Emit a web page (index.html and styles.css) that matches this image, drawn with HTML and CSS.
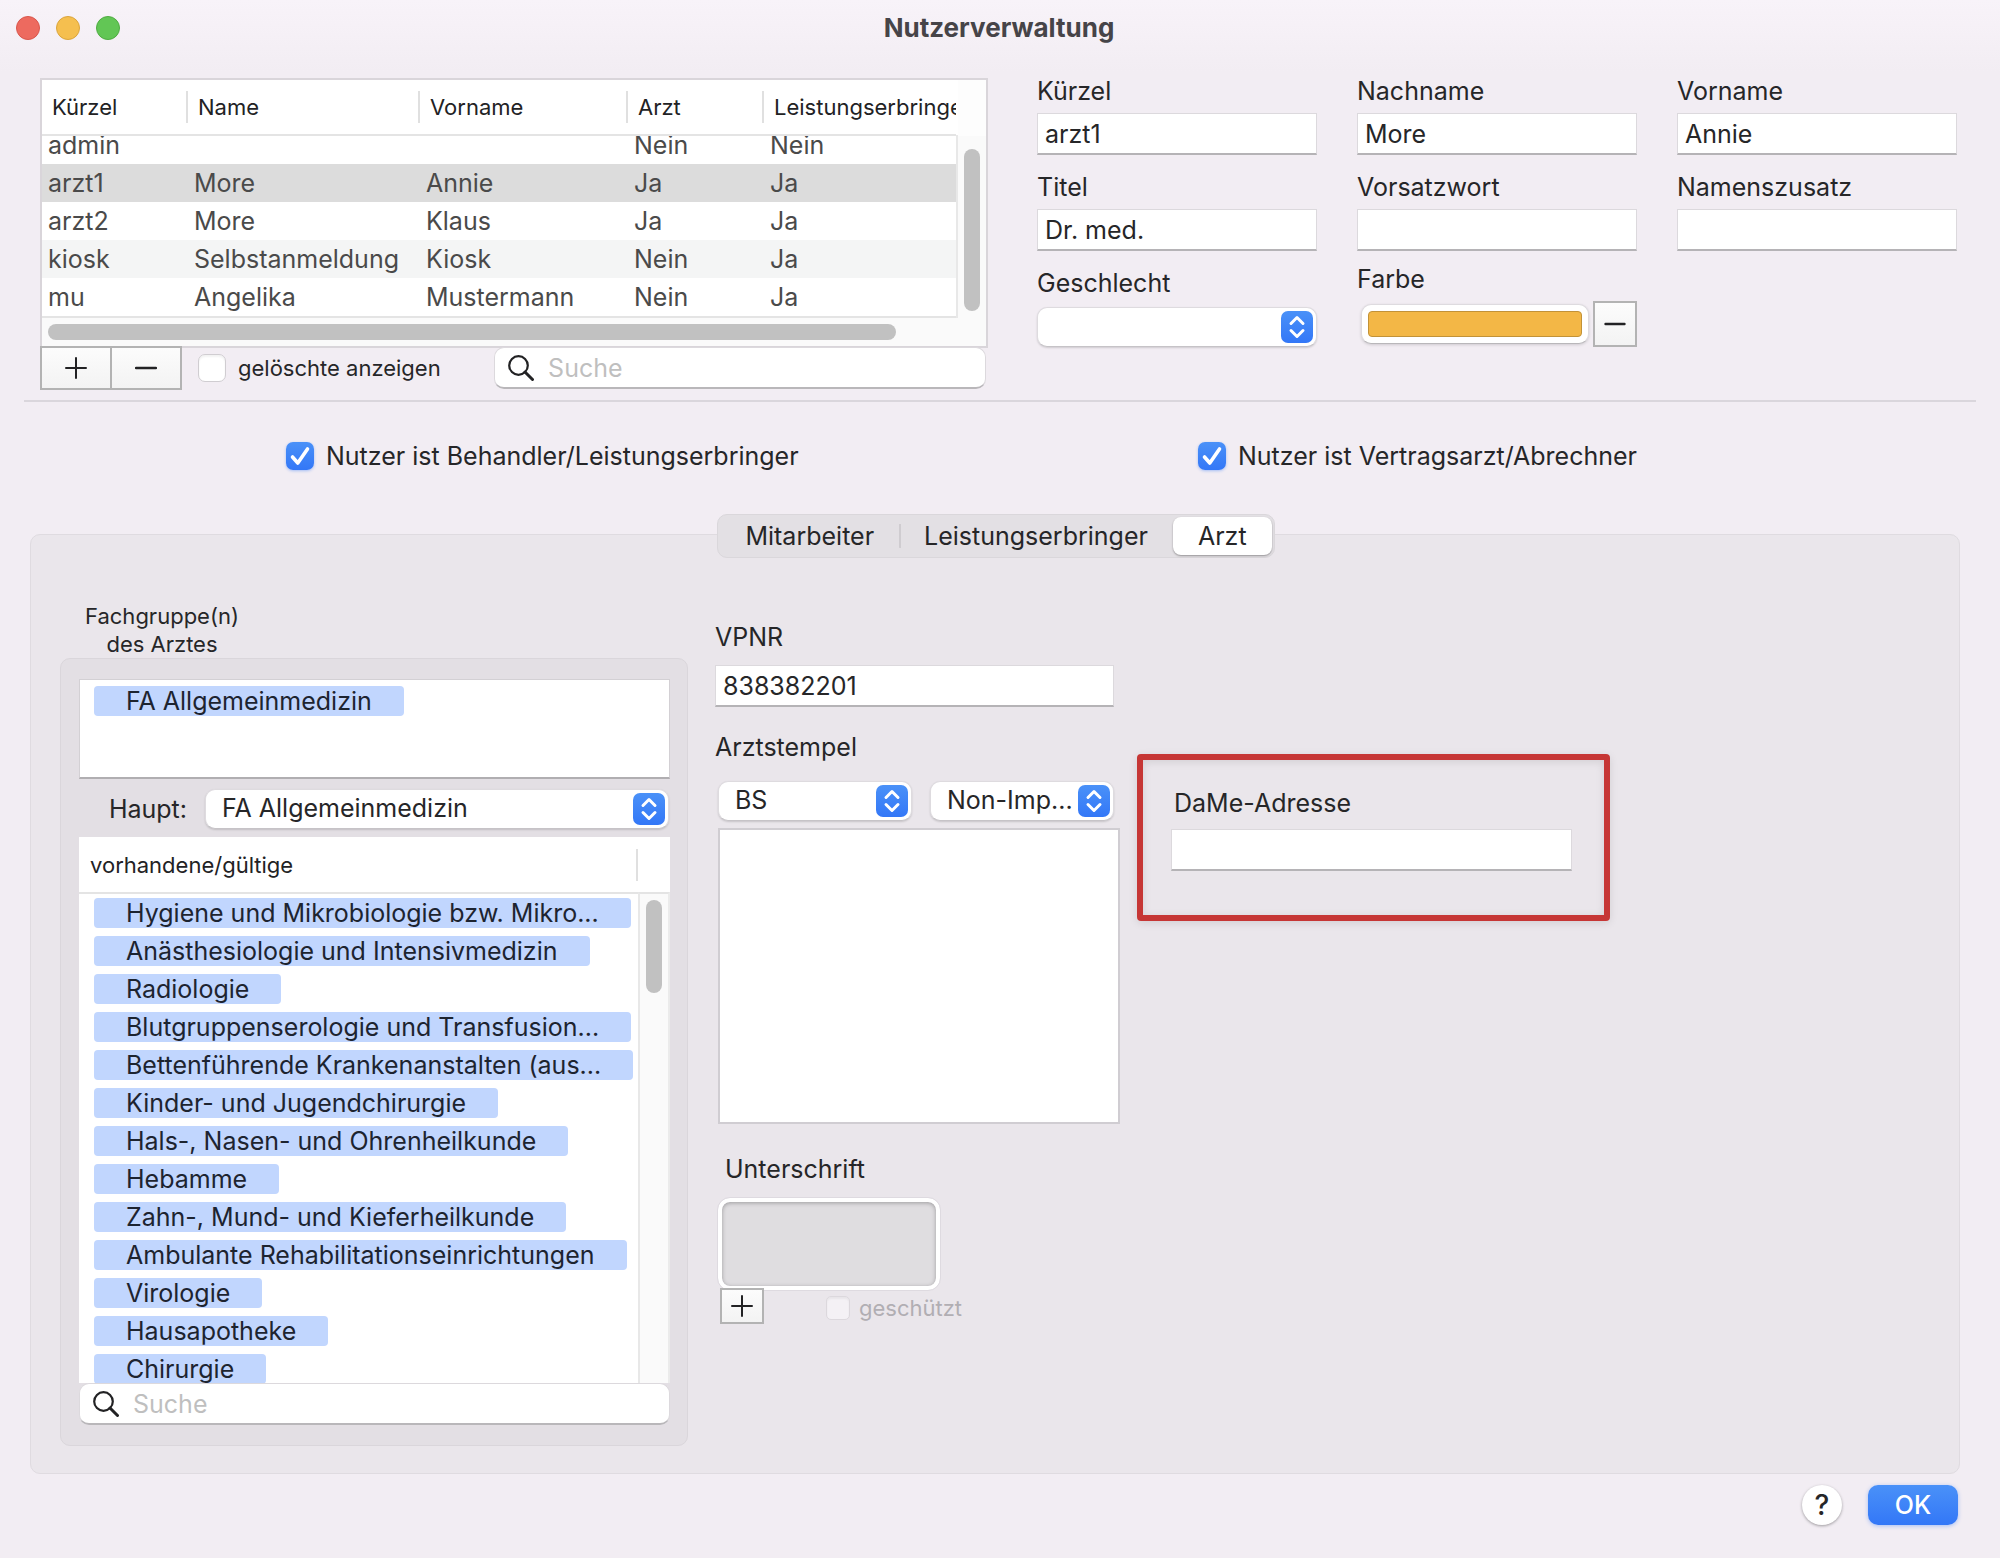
FILE: index.html
```html
<!DOCTYPE html>
<html lang="de">
<head>
<meta charset="utf-8">
<title>Nutzerverwaltung</title>
<link rel="stylesheet" href="styles.css">
</head>
<body>
<svg class="defs" aria-hidden="true">
  <symbol id="updown" viewBox="0 0 32 32"><path d="M10 12.500L16 6.500L22 12.500M10 19.500L16 25.500L22 19.500" fill="none" stroke="#fff" stroke-width="3" stroke-linecap="round" stroke-linejoin="round"/></symbol>
  <symbol id="check" viewBox="0 0 28 28"><path d="M6.500 15L11.800 21L21.500 7" fill="none" stroke="#fff" stroke-width="3.600" stroke-linecap="round" stroke-linejoin="round"/></symbol>
  <symbol id="lens" viewBox="0 0 26 26"><circle cx="10.500" cy="10.500" r="9.300" fill="none" stroke="#222224" stroke-width="2.200"/><path d="M17 17L24.500 24.500" stroke="#222224" stroke-width="3" stroke-linecap="round"/></symbol>
  <symbol id="plus" viewBox="0 0 22 22"><path d="M1 11H21M11 1V21" stroke="#222224" stroke-width="2" stroke-linecap="round"/></symbol>
  <symbol id="minus" viewBox="0 0 22 22"><path d="M1 11H21" stroke="#222224" stroke-width="2.400" stroke-linecap="round"/></symbol>
  <symbol id="minus-small" viewBox="0 0 22 22"><path d="M1.500 11H20.500" stroke="#222224" stroke-width="2.400" stroke-linecap="round"/></symbol>
</svg>

<header class="titlebar">
  <div class="lights">
    <button class="light close" aria-label="Schließen"></button>
    <button class="light minimize" aria-label="Minimieren"></button>
    <button class="light maximize" aria-label="Maximieren"></button>
  </div>
  <h1 class="title">Nutzerverwaltung</h1>
</header>

<main class="content">
  <section class="top">
    <div class="users">
      <div class="users-frame">
        <div class="users-view">
          <table class="users-table">
            <colgroup><col class="c1"><col class="c2"><col class="c3"><col class="c4"><col class="c5"></colgroup>
            <thead><tr><th>Kürzel</th><th>Name</th><th>Vorname</th><th>Arzt</th><th>Leistungserbringer</th></tr></thead>
            <tbody>
              <tr class="scrolled"><td><div>admin</div></td><td></td><td></td><td><div>Nein</div></td><td><div>Nein</div></td></tr>
              <tr class="selected"><td>arzt1</td><td>More</td><td>Annie</td><td>Ja</td><td>Ja</td></tr>
              <tr><td>arzt2</td><td>More</td><td>Klaus</td><td>Ja</td><td>Ja</td></tr>
              <tr class="striped"><td>kiosk</td><td>Selbstanmeldung</td><td>Kiosk</td><td>Nein</td><td>Ja</td></tr>
              <tr><td>mu</td><td>Angelika</td><td>Mustermann</td><td>Nein</td><td>Ja</td></tr>
            </tbody>
          </table>
          <div class="vtrack"><div class="thumb"></div></div>
        </div>
        <div class="htrack"><div class="thumb"></div></div>
      </div>
      <div class="users-actions">
        <div class="pair">
          <button class="square wide" aria-label="Hinzufügen"><svg class="sign"><use href="#plus"/></svg></button>
          <button class="square wide" aria-label="Entfernen"><svg class="sign"><use href="#minus"/></svg></button>
        </div>
        <label class="tick small"><input type="checkbox" class="box"><span>gelöschte anzeigen</span></label>
        <label class="search"><svg class="lens"><use href="#lens"/></svg><input type="search" placeholder="Suche" aria-label="Suche"></label>
      </div>
    </div>

    <form class="person">
      <div class="field"><label for="kuerzel">Kürzel</label><input class="text" id="kuerzel" value="arzt1"></div>
      <div class="field"><label for="nachname">Nachname</label><input class="text" id="nachname" value="More"></div>
      <div class="field"><label for="vorname">Vorname</label><input class="text" id="vorname" value="Annie"></div>
      <div class="field"><label for="titel">Titel</label><input class="text" id="titel" value="Dr. med."></div>
      <div class="field"><label for="vorsatz">Vorsatzwort</label><input class="text" id="vorsatz"></div>
      <div class="field"><label for="zusatz">Namenszusatz</label><input class="text" id="zusatz"></div>
      <div class="field choice"><label for="geschlecht">Geschlecht</label>
        <div class="popup"><select id="geschlecht"><option></option></select><svg class="arrows"><use href="#updown"/></svg></div></div>
      <div class="field color"><label for="farbe">Farbe</label>
        <div class="color-row"><input type="color" id="farbe" value="#f3b746"><button type="button" class="square tall" aria-label="Farbe entfernen"><svg class="sign"><use href="#minus-small"/></svg></button></div></div>
    </form>
  </section>

  <hr class="rule">

  <section class="roles">
    <label class="tick"><span class="mark"><input type="checkbox" class="box" checked><svg><use href="#check"/></svg></span><span>Nutzer ist Behandler/Leistungserbringer</span></label>
    <label class="tick"><span class="mark"><input type="checkbox" class="box" checked><svg><use href="#check"/></svg></span><span>Nutzer ist Vertragsarzt/Abrechner</span></label>
  </section>

  <nav class="tabs" role="tablist">
    <button class="tab" role="tab">Mitarbeiter</button>
    <button class="tab split" role="tab">Leistungserbringer</button>
    <button class="tab active" role="tab" aria-selected="true">Arzt</button>
  </nav>

  <section class="panel">
    <div class="groups">
      <h2 class="groups-title">Fachgruppe(n)<br>des Arztes</h2>
      <div class="groupbox">
        <div class="chosen"><span class="tag">FA Allgemeinmedizin</span></div>
        <div class="main-group">
          <label for="haupt">Haupt:</label>
          <div class="popup"><select id="haupt"><option>FA Allgemeinmedizin</option></select><svg class="arrows"><use href="#updown"/></svg></div>
        </div>
        <div class="available">
          <table class="tag-table">
            <thead><tr><th>vorhandene/gültige</th></tr></thead>
            <tbody>
              <tr><td><span class="tag">Hygiene und Mikrobiologie bzw. Mikro...</span></td></tr>
              <tr><td><span class="tag">Anästhesiologie und Intensivmedizin</span></td></tr>
              <tr><td><span class="tag">Radiologie</span></td></tr>
              <tr><td><span class="tag">Blutgruppenserologie und Transfusion...</span></td></tr>
              <tr><td><span class="tag">Bettenführende Krankenanstalten (aus...</span></td></tr>
              <tr><td><span class="tag">Kinder- und Jugendchirurgie</span></td></tr>
              <tr><td><span class="tag">Hals-, Nasen- und Ohrenheilkunde</span></td></tr>
              <tr><td><span class="tag">Hebamme</span></td></tr>
              <tr><td><span class="tag">Zahn-, Mund- und Kieferheilkunde</span></td></tr>
              <tr><td><span class="tag">Ambulante Rehabilitationseinrichtungen</span></td></tr>
              <tr><td><span class="tag">Virologie</span></td></tr>
              <tr><td><span class="tag">Hausapotheke</span></td></tr>
              <tr><td><span class="tag">Chirurgie</span></td></tr>
            </tbody>
          </table>
          <div class="vtrack"><div class="thumb"></div></div>
        </div>
        <label class="search"><svg class="lens"><use href="#lens"/></svg><input type="search" placeholder="Suche" aria-label="Fachgruppe suchen"></label>
      </div>
    </div>

    <div class="stamp">
      <label for="vpnr">VPNR</label>
      <input class="text" id="vpnr" value="838382201">
      <label for="stempel">Arztstempel</label>
      <div class="popups">
        <div class="popup"><select aria-label="Stempelart"><option>BS</option></select><svg class="arrows"><use href="#updown"/></svg></div>
        <div class="popup"><select aria-label="Druckart"><option>Non-Imp...</option></select><svg class="arrows"><use href="#updown"/></svg></div>
      </div>
      <textarea id="stempel"></textarea>
      <h3 class="sign-title">Unterschrift</h3>
      <div class="well"></div>
      <div class="sign-actions">
        <button class="square low" aria-label="Unterschrift hinzufügen"><svg class="sign"><use href="#plus"/></svg></button>
        <label class="tick small off"><input type="checkbox" class="box" disabled><span>geschützt</span></label>
      </div>
    </div>

    <div class="dame">
      <label for="dame">DaMe-Adresse</label>
      <input class="text" id="dame">
    </div>
  </section>

  <footer class="bottom">
    <button class="help" aria-label="Hilfe">?</button>
    <button class="ok">OK</button>
  </footer>
</main>
</body>
</html>
```

FILE: styles.css
```css
* { box-sizing: border-box; }

body {
  margin: 0;
  min-height: 100vh;
  background: linear-gradient(#f8f3f9, #f2edf3 72px);
  color: #262628;
  font: 25px/32px Inter, "Liberation Sans", sans-serif;
}

button, input, select, textarea {
  margin: 0;
  color: inherit;
  font: inherit;
}

button { padding: 0; border: 0; }
h1, h2, h3 { margin: 0; font-size: inherit; font-weight: 400; }
.defs { display: none; }

/* Title bar */
.titlebar {
  display: grid;
  grid-template-columns: 1fr auto 1fr;
  align-items: center;
  height: 56px;
  padding: 0 18px 0 16px;
}
.lights { display: flex; gap: 16px; }
.light { width: 24px; height: 24px; border: 1px solid; border-radius: 50%; }
.close { background: #ed6a5f; border-color: #d9564c; }
.minimize { background: #f5bf4f; border-color: #dba53c; }
.maximize { background: #62c655; border-color: #4fac42; }
.title { font-size: 26px; font-weight: 700; color: #464448; }

/* Users and personal data */
.top {
  display: grid;
  grid-template-columns: 948fr 920fr;
  gap: 49px;
  align-items: start;
  padding: 15px 43px 10px 40px;
}
.users { padding-top: 7px; }
.users-frame {
  height: 270px;
  border: 2px solid #d9d5da;
  background: #fafafa;
}
.users-view {
  display: grid;
  grid-template-columns: 1fr 30px;
  height: 238px;
  overflow: hidden;
}
table { border-collapse: separate; border-spacing: 0; table-layout: fixed; width: 100%; }
th, td { padding: 0; text-align: left; white-space: nowrap; overflow: hidden; }
th { font-size: 22px; font-weight: 400; color: #222224; }
.users-table { background: #fff; border-bottom: 2px solid #e4e4e4; }
.users-table .c1 { width: 146px; }
.users-table .c2 { width: 232px; }
.users-table .c3 { width: 208px; }
.users-table .c4 { width: 136px; }
.users-table th {
  height: 56px;
  padding-left: 10px;
  border-bottom: 2px solid #e4e4e4;
  background: linear-gradient(#e0e0e0, #e0e0e0) right center / 2px 32px no-repeat;
}
.users-table th:last-child { background: none; }
.users-table td { height: 38px; padding-left: 6px; color: #4a4a4a; }
.users-table .scrolled td { height: 28px; }
.scrolled div {
  display: flex;
  align-items: flex-end;
  height: 28px;
  overflow: hidden;
  line-height: 38px;
}
.selected { background: #dcdcdc; }
.striped { background: #f4f5f5; }
.vtrack { border-left: 2px solid #e8e8e8; background: #fafafa; }
.thumb { border-radius: 8px; background: #c1c1c1; }
.users-view .vtrack {
  padding: 69px 6px 6px;
  border-image: linear-gradient(#fff 56px, #e8e8e8 56px) 1;
  background: linear-gradient(#fdfdfd 56px, #fafafa 56px);
}
.users-view .thumb { height: 162px; }
.htrack { padding: 6px; }
.htrack .thumb { width: 91%; height: 16px; }

.users-actions {
  display: flex;
  align-items: center;
  height: 44px;
  margin-top: -2px;
  padding-right: 2px;
}
.pair { display: flex; }
.square {
  display: grid;
  place-items: center;
  border: 2px solid #b3b3b3;
  background: linear-gradient(#fcfcfc, #f3f3f3);
}
.sign { width: 22px; height: 22px; }
.wide { width: 72px; height: 44px; }
.wide + .wide { margin-left: -2px; }
.tall { width: 44px; height: 46px; }
.low { width: 44px; height: 36px; }

.tick { display: flex; align-items: center; gap: 12px; }
.small { font-size: 22px; }
.users-actions .tick { margin: 0 auto 0 16px; }
.box {
  appearance: none;
  flex: none;
  width: 28px;
  height: 28px;
  border: 1px solid #d0cdd1;
  border-radius: 7px;
  background: #fff;
  box-shadow: inset 0 2px 2px #0000000d;
}
.box:checked {
  border: 0;
  background: linear-gradient(#4a91f8, #3377f7);
  box-shadow: 0 1px 3px #3377f766;
}
.mark { display: grid; }
.mark > * { grid-area: 1 / 1; width: 28px; height: 28px; }
.mark svg { z-index: 1; pointer-events: none; }

.search {
  display: flex;
  align-items: center;
  gap: 14px;
  height: 42px;
  padding: 0 13px;
  border: 1px solid #dcd9dd;
  border-bottom: 2px solid #b9b7ba;
  border-radius: 10px;
  background: #fff;
}
.users-actions .search { width: 52%; }
.lens { flex: none; width: 26px; height: 26px; }
.search input {
  appearance: none;
  flex: 1;
  min-width: 0;
  padding: 1px 0 0;
  border: 0;
  outline: 0;
  background: none;
}
.search input::placeholder { color: #bfbfbf; opacity: 1; }

.person {
  display: grid;
  grid-template-columns: repeat(3, 1fr);
  gap: 12px 40px;
}
.field { display: flex; flex-direction: column; gap: 6px; padding-top: 4px; }
.field.choice { gap: 8px; }
.field.color { padding-top: 0; }
.text {
  width: 100%;
  height: 42px;
  padding: 1px 7px 0;
  border: 1px solid #dcd9dd;
  border-bottom: 2px solid #b5b3b6;
  border-radius: 0;
  outline: 0;
  background: #fff;
}
.popup { display: grid; position: relative; }
.popup select {
  appearance: none;
  width: 100%;
  height: 40px;
  padding: 0 36px 2px 16px;
  border: 1px solid #dedbdf;
  border-bottom-color: #c6c3c7;
  border-radius: 10px;
  outline: 0;
  background: #fff;
  box-shadow: 0 1px 2px #00000026;
}
.arrows {
  position: absolute;
  top: 4px;
  right: 4px;
  width: 32px;
  height: 32px;
  border-radius: 7px;
  background: linear-gradient(#4a91f8, #3377f7);
  pointer-events: none;
}
.color-row { display: flex; align-items: center; gap: 4px; padding-left: 4px; }
.color-row input {
  appearance: none;
  flex: 1;
  min-width: 0;
  height: 40px;
  padding: 6px;
  border: 1px solid #dedbdf;
  border-bottom-color: #b9b7ba;
  border-radius: 10px;
  background: #fff;
  box-shadow: 0 1px 3px #00000026;
}
.color-row input::-webkit-color-swatch-wrapper { padding: 0; }
.color-row input::-webkit-color-swatch { border: 1px solid #c29238; border-radius: 4px; }

.rule { height: 2px; margin: 0 24px; border: 0; background: #dad6dc; }

.roles {
  display: grid;
  grid-template-columns: 912fr 802fr;
  padding: 38px 0 0 286px;
}

/* Tabs */
.tabs {
  display: flex;
  width: fit-content;
  height: 44px;
  margin: 42px auto 0;
  padding: 2px;
  border: 1px solid #dad7db;
  border-radius: 10px;
  background: #e3e0e4;
}
.content { display: flow-root; }
.content > .tabs { position: relative; transform: translateX(-4px); }
.tab { padding: 0 25px; border-radius: 8px; background: none; }
.split { background: linear-gradient(#cfccd0, #cfccd0) left center / 2px 24px no-repeat; }
.tab.active { background: #fff; box-shadow: 0 1px 2px #00000059; }

/* Panel */
.panel {
  display: grid;
  grid-template-columns: 628fr 415fr 473fr 303fr;
  column-gap: 17px;
  align-items: start;
  margin: -24px 40px 0 30px;
  padding: 67px 29px 27px;
  border: 1px solid #dfdbe0;
  border-radius: 10px;
  background: #eae6eb;
}
.groups-title {
  width: 204px;
  font-size: 22px;
  line-height: 28px;
  text-align: center;
}
.groupbox {
  padding: 20px 17px 20px 18px;
  border: 1px solid #dad6db;
  border-radius: 10px;
  background: #e3dfe4;
}
.chosen {
  height: 100px;
  padding: 6px 14px;
  border: 1px solid #d3d0d4;
  border-bottom: 2px solid #b0aeb1;
  background: #fff;
}
.tag {
  display: block;
  width: fit-content;
  height: 30px;
  padding: 0 32px;
  border-radius: 4px;
  background: #c1d6fe;
  color: #1d2430;
  line-height: 30px;
}
.main-group {
  display: grid;
  grid-template-columns: 108px 1fr;
  gap: 18px;
  align-items: center;
  padding: 10px 1px 8px 0;
}
.main-group label { text-align: right; }
.available {
  display: grid;
  grid-template-columns: 1fr 32px;
  height: 546px;
  overflow: hidden;
  background: #fff;
}
.tag-table { align-self: start; }
.tag-table th {
  height: 57px;
  padding-left: 11px;
  border-bottom: 2px solid #e4e4e4;
  background: linear-gradient(#e0e0e0, #e0e0e0) right center / 2px 32px no-repeat;
}
.tag-table td { height: 38px; padding-left: 15px; }
.available .vtrack {
  padding: 6px;
  margin-top: 55px;
  border-top: 2px solid #e4e4e4;
  border-right: 2px solid #ebebeb;
}
.available .thumb { height: 93px; }

.stamp { display: flex; flex-direction: column; padding: 19px 6px 0 10px; }
.stamp > label { margin-bottom: 12px; }
.stamp .text + label { margin-top: 24px; margin-bottom: 18px; }
.popups { display: grid; grid-template-columns: 194fr 184fr; gap: 18px; padding-left: 3px; }
.stamp textarea {
  display: block;
  height: 296px;
  margin: 7px -6px 0 3px;
  border: 2px solid #d0cdd2;
  outline: 0;
  background: #fff;
  resize: none;
}
.sign-title { margin: 29px 0 13px 10px; }
.well {
  width: 222px;
  height: 92px;
  margin-left: 3px;
  border: 4px solid #fff;
  border-radius: 12px;
  outline: 1px solid #dedae0;
  background: #dfdde0;
  box-shadow: inset 0 1px 4px #0000004d;
}
.sign-actions {
  display: flex;
  position: relative;
  align-items: flex-end;
  gap: 62px;
  margin: -2px 0 0 5px;
}
.off { gap: 9px; color: #b1aeb3; }
.off .box { width: 24px; height: 24px; border-color: #dcd8dd; border-radius: 5px; background: #f4f1f5; }

.dame {
  display: grid;
  gap: 10px;
  margin-top: 152px;
  padding: 27px 32px 44px 28px;
  border: 6px solid #c63635;
  border-radius: 4px;
  box-shadow: 0 2px 8px #0000001a, inset 0 2px 8px #0000001a;
}
.dame label { padding-left: 3px; }

/* Footer */
.bottom {
  display: flex;
  justify-content: flex-end;
  align-items: center;
  gap: 26px;
  padding: 11px 42px 23px;
}
.help {
  width: 40px;
  height: 40px;
  border-radius: 50%;
  background: #fff;
  box-shadow: 0 1px 3px #00000059;
  font-size: 28px;
  font-weight: 500;
}
.ok {
  width: 90px;
  height: 40px;
  border-radius: 10px;
  background: linear-gradient(#4a91f8, #3377f7);
  box-shadow: 0 1px 4px #3377f766;
  color: #fff;
  font-weight: 500;
}
```
